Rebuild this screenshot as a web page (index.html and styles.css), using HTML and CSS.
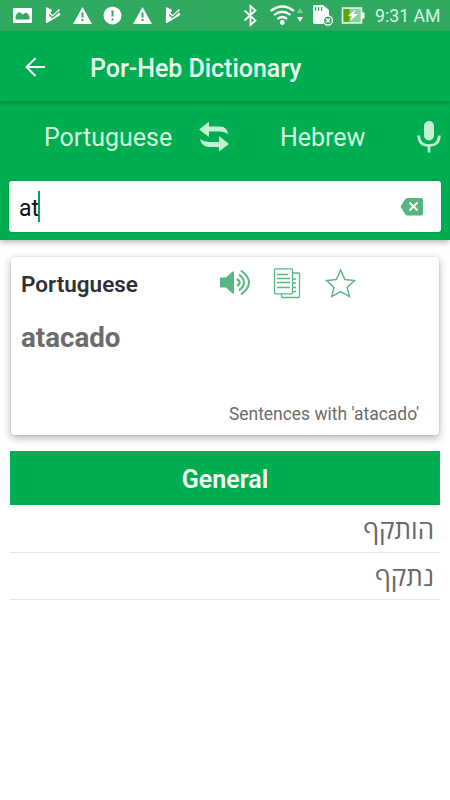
FILE: index.html
```html
<!DOCTYPE html>
<html lang="en">
<head>
<meta charset="utf-8">
<title>Por-Heb Dictionary</title>
<link rel="stylesheet" href="styles.css">
</head>
<body>
<div class="status">
  <svg class="notices" width="184" height="31" viewBox="0 0 184 31" fill="#fff">
    <path fill-rule="evenodd" d="M14 8h17q1 0 1 1v13q0 1-1 1H14q-1 0-1-1V9q0-1 1-1zm1.500 11.500h14v-3q-2-5-4.500-3.500l-2 1.500-2.500-2q-3-1-5 4z"/>
    <g id="check"><path d="M46 7l6 3-1.500 3 2.500 2 5-4.500L60.500 15 47 23q-1 .5-1.200-1z"/><path d="M49 13l3.500 3.500 7-7" fill="none" stroke="#fff" stroke-width="1.500"/><path d="M49 14.500l3.500 3.200 6-6" fill="none" stroke="#30a960" stroke-width="1.300"/></g>
    <g id="warn"><path d="M82.500 7l9.500 17H73z"/><path d="M81.500 12.500h2v5h-2zm0 6.500h2v2h-2z" fill="#30a960"/></g>
    <circle cx="112.500" cy="15.500" r="9"/><path d="M111.500 10.500h2v6h-2zm0 8h2v2h-2z" fill="#30a960"/>
    <use href="#warn" x="60"/>
    <use href="#check" x="120"/>
  </svg>
  <div class="system">
    <svg width="122" height="31" viewBox="243 0 122 31" fill="#fff">
      <path d="M244.500 10.500l11 10-5 4.500V6l5 4.500-11 10" fill="none" stroke="#fff" stroke-width="1.800"/>
      <g fill="none" stroke="#fff" stroke-width="2.200"><path d="M270.500 11q12-9 23.500 0M274 15q8.500-6.500 16.500 0M277.500 19q5-4 9.500 0"/></g><circle cx="282.300" cy="22.500" r="2.400"/>
      <path d="M297 13l3-5 3 5z" opacity=".4"/><path d="M297 17h6l-3 5z"/>
      <path d="M314 5h9l6 5v8l-6 6h-8q-2 0-2-2V6z"/><path d="M315 7h1.200v4H315zm3 0h1.200v4H318zm3 0h1.200v4H321z" fill="#30a960"/>
      <circle cx="328" cy="20.500" r="4.500" fill="#30a960" stroke="#fff" stroke-width="1.300"/><path d="M326 18.500l4 4m0-4l-4 4" stroke="#fff" stroke-width="1.300"/>
      <path d="M342.500 8h19v15h-19z" fill="#8bcf9f" stroke="#e6f7ec" stroke-width="1.600"/><path d="M343.500 9h6v13h-6z" fill="#5da500"/><path d="M362 12.500h2.500v6H362z"/><path d="M355 10l-7 6h4l-2 5 8-7h-4.500l2-4z"/>
    </svg>
    <span class="clock">9:31 AM</span>
  </div>
</div>
<header class="toolbar">
  <svg width="22" height="22" viewBox="0 0 22 22" fill="none" stroke="#fff" stroke-width="2"><path d="M21 10H3M11.500 1.300L2.500 10l9 9"/></svg>
  <h1>Por-Heb Dictionary</h1>
</header>
<section class="lookup">
  <div class="languages">
    <span class="source">Portuguese</span>
    <svg class="swap" width="32" height="32" viewBox="0 0 32 32" fill="#c5f0d4"><path d="M1 8.500L11 .8v4.700h11q7 0 8 7.500-3-2.500-8-2.500H11V16z"/><path d="M31 23L21 30.500V26H11q-7 0-9-8 4 3 9 3h10v-6z"/></svg>
    <span class="target">Hebrew</span>
    <svg class="mic" width="24" height="34" viewBox="0 0 24 34"><rect x="7" y="1" width="10" height="19.500" rx="5" fill="#c5f0d4"/><path d="M1.600 15.500Q2 25.500 12 25.500T22.400 15.500M12 25v7.500" fill="none" stroke="#c5f0d4" stroke-width="2.700"/></svg>
  </div>
  <div class="search">
    <span class="query">at</span><i class="caret"></i>
    <svg class="clear" width="24" height="18" viewBox="0 0 24 18"><path d="M7 0h14q2 0 2 2v13.500q0 2-2 2H7q-1 0-2-1.500L.5 8.700 5 1.500Q6 0 7 0z" fill="#56b57f"/><path d="M9.500 4.500l8 8m0-8l-8 8" stroke="#fff" stroke-width="2"/></svg>
  </div>
</section>
<main>
  <article class="card">
    <div class="head">
      <h2>Portuguese</h2>
      <svg class="sound" width="32" height="28" viewBox="0 0 32 28"><path d="M1 9.500q0-1 1-1h5L13 3q2-1.500 2 0v21q0 1.500-2 0l-6-5.500H2q-1 0-1-1z" fill="#56b982"/><g fill="none" stroke="#56b982" stroke-width="2.100"><path d="M18 10q5.500 3.500 0 7M20 5.500q10 8 0 16M22 1.500q16 12 0 24"/></g></svg>
      <svg class="copy" width="28" height="31" viewBox="0 0 28 31" fill="none" stroke="#56b982" stroke-width="1.300"><rect x="1.500" y=".8" width="18" height="25" rx="1"/><path d="M4 6.500h11M4 10.500h13M4 14.500h13M4 19.500h13M20 5h5.500q1 0 1 1v22.500q0 1-1 1H9.500q-1 0-1-1V26M20 11h3M20 15h3M20 19.500h3M20 23.500h3"/></svg>
      <svg class="star" width="32" height="31" viewBox="0 0 32 31" fill="none" stroke="#56b982" stroke-width="1.500"><path d="M15.600 2l4.300 9.600 9.600 1-7.400 6.800 2.300 9.200-8.800-5-8.800 5L9 19.400l-7.300-6.800 9.600-1z"/></svg>
    </div>
    <p class="word">atacado</p>
    <p class="sentences">Sentences with 'atacado'</p>
  </article>
  <h3 class="category">General</h3>
  <ul class="results" dir="rtl" lang="he">
    <li>הותקף</li>
    <li>נתקף</li>
  </ul>
</main>
</body>
</html>
```
FILE: styles.css
```css
* { box-sizing: border-box; }
body { margin: 0; background: #fff; font-family: Roboto, "Liberation Sans", sans-serif; height: 800px; overflow: hidden; }
h1, h2, h3, p, ul { margin: 0; padding: 0; }
svg { display: block; flex: none; }
.status { display: flex; justify-content: space-between; height: 31px; background: #30a960; }
.system { display: flex; align-items: center; padding-right: 10px; }
.clock { width: 65px; margin-left: 10px; font-size: 17.700px; line-height: 31px; padding-top: 2px; color: #d7f5e2; white-space: nowrap; }
.toolbar { display: flex; align-items: center; gap: 44px; height: 70px; padding: 3px 0 0 24px; background: #00ad51; box-shadow: 0 2px 4px rgba(0, 70, 30, .4); position: relative; }
.toolbar h1 { padding-top: 1px; color: #e9fff2; font-size: 25px; font-weight: 500; letter-spacing: -.03px; white-space: nowrap; }
.lookup { height: 139px; background: #00ad51; padding: 0 9px; box-shadow: 0 2px 6px rgba(0, 0, 0, .3); }
.languages { display: flex; align-items: center; height: 80px; padding: 0 0 7px 35px; color: #d2f7df; font-size: 25px; white-space: nowrap; }
.source { width: 155px; }
.swap { margin-right: 49px; }
.target { width: 139px; padding-left: 1px; }
.swap, .mic { margin-top: -1px; }
.search { display: flex; align-items: center; height: 51px; padding: 0 17px 0 10px; background: #fff; border-radius: 3px; box-shadow: 0 0 2px #087f40; color: #111; font-size: 23px; }
.query { width: 19px; padding-top: 3px; }
.caret { width: 2px; height: 31px; background: #109b50; }
.clear { margin-left: auto; }
main { padding: 17px 10px 0; }
.card { height: 178px; margin: 0 1px 16px; padding: 9px 20px 0 10px; background: #fff; border-radius: 4px; box-shadow: 0 3px 8px rgba(0, 0, 0, .3), 0 0 2px rgba(0, 0, 0, .15); }
.head { display: flex; align-items: center; height: 34px; }
.head h2 { width: 198px; padding-top: 1px; font-size: 22.500px; font-weight: 600; color: #303034; }
.copy { margin-left: 22px; }
.star { margin-left: 24px; }
.word { margin-top: 21px; font-size: 27.700px; line-height: 33px; font-weight: 700; color: #6c6c6c; }
.sentences { margin-top: 50px; font-size: 17.450px; line-height: 21px; color: #6c6c6c; text-align: right; }
.category { height: 54px; background: #00ad51; color: #f5fff8; font-size: 25px; font-weight: 600; line-height: 57px; text-align: center; }
.results { list-style: none; font-family: "Open Sans", "Noto Sans", sans-serif; font-size: 26px; color: #686868; }
.results li { height: 47px; line-height: 47px; padding: 0 6px; border-bottom: 1px solid #e7e7e7; }
.results li:first-child { height: 48px; line-height: 49px; }
```
